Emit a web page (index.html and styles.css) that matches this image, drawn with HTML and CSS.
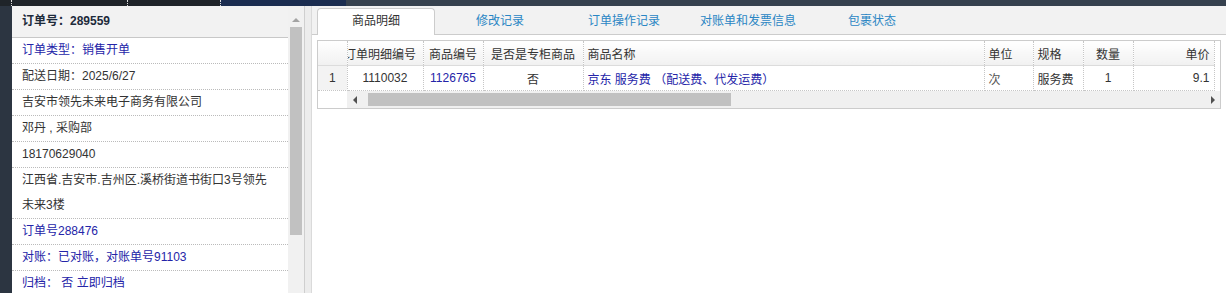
FILE: index.html
```html
<!DOCTYPE html>
<html lang="zh-CN">
<head>
  <meta charset="UTF-8">
  <title>订单详情</title>
  <link rel="stylesheet" href="styles.css">
</head>
<body>
  <div class="topbar">
    <span class="seg s1"></span>
    <span class="seg s2"></span>
    <span class="seg s3"></span>
    <span class="seg s4"></span>
    <span class="seg s5"></span>
  </div>

  <div class="main">
    <div class="side">
      <div class="order-head">订单号：289559</div>
      <div class="info-row blue">订单类型：销售开单</div>
      <div class="info-row">配送日期：2025/6/27</div>
      <div class="info-row">吉安市领先未来电子商务有限公司</div>
      <div class="info-row">邓丹 , 采购部</div>
      <div class="info-row">18170629040</div>
      <div class="info-row">江西省.吉安市.吉州区.溪桥街道书街口3号领先<br>未来3楼</div>
      <div class="info-row blue">订单号288476</div>
      <div class="info-row blue">对账：已对账，对账单号91103</div>
      <div class="info-row blue">归档： 否 立即归档</div>
    </div>
    <div class="vscroll">
      <div class="arrow-up"></div>
      <div class="vthumb"></div>
    </div>
    <div class="split"></div>

    <div class="content">
      <div class="tabs">
        <div class="tab active">商品明细</div>
        <div class="tab">修改记录</div>
        <div class="tab">订单操作记录</div>
        <div class="tab">对账单和发票信息</div>
        <div class="tab">包裹状态</div>
      </div>

      <div class="grid">
        <table>
          <colgroup>
            <col style="width:29px">
            <col style="width:76px">
            <col style="width:60px">
            <col style="width:100px">
            <col style="width:401px">
            <col style="width:49px">
            <col style="width:50px">
            <col style="width:50px">
            <col style="width:81px">
          </colgroup>
          <thead>
            <tr>
              <th class="rn"></th>
              <th><div class="clip"><span>订单明细编号</span></div></th>
              <th class="c">商品编号</th>
              <th class="c">是否是专柜商品</th>
              <th class="l">商品名称</th>
              <th class="l">单位</th>
              <th class="l">规格</th>
              <th class="c">数量</th>
              <th class="r">单价</th>
            </tr>
          </thead>
          <tbody>
            <tr>
              <td class="rn">1</td>
              <td class="c">1110032</td>
              <td class="c link">1126765</td>
              <td class="c">否</td>
              <td class="l link">京东 服务费 （配送费、代发运费）</td>
              <td class="l muted">次</td>
              <td class="l">服务费</td>
              <td class="c">1</td>
              <td class="r">9.1</td>
            </tr>
          </tbody>
        </table>
        <div class="hscroll">
          <div class="hs-pad"></div>
          <div class="hs-track">
            <span class="arrow-left"></span>
            <span class="hthumb"></span>
            <span class="arrow-right"></span>
          </div>
        </div>
      </div>
    </div>
  </div>
</body>
</html>
```

FILE: styles.css
```css
body {
  margin: 0;
  background: #2c3541;
  font-family: 'Liberation Sans', 'Noto Sans CJK SC', sans-serif;
  font-size: 12px;
  color: #333;
  overflow: hidden;
}
.topbar {
  display: flex;
  height: 6px;
}
.seg {
  height: 6px;
}
.s1 { width: 11px; background: #1f2429; }
.s2 { width: 115px; background: #1f2429; border-left: 1px dotted #ddd; }
.s3 { width: 92px; background: #1f2429; border-left: 1px dotted #ddd; }
.s4 { width: 125px; background: #1b2d50; border-left: 1px dotted #ddd; }
.s5 { flex: 1; background: #36414e; }

.main {
  display: flex;
  height: 287px;
}
.side {
  margin-left: 12px;
  width: 276px;
  background: #fff;
  overflow: hidden;
}
.order-head {
  height: 31px;
  line-height: 31px;
  padding-left: 10px;
  background: #f2f2f2;
  border-bottom: 1px solid #c8c8c8;
  font-weight: bold;
  color: #1e2b3b;
}
.info-row {
  line-height: 25px;
  padding: 0 10px;
  border-bottom: 1px dotted #bbb;
  color: #333;
}
.info-row.blue {
  color: #2424a8;
}
.vscroll {
  width: 16px;
  background: #f1f1f1;
}
.arrow-up {
  width: 0;
  height: 0;
  margin: 12px auto 0;
  border-left: 4px solid transparent;
  border-right: 4px solid transparent;
  border-bottom: 4px solid #a3a3a3;
}
.vthumb {
  margin: 5px 2px 0;
  height: 208px;
  background: #c1c1c1;
}
.split {
  width: 6px;
  background: #ececec;
  border-left: 1px solid #cfcfcf;
  border-right: 1px solid #dadada;
}

.content {
  flex: 1;
  background: #fff;
}
.tabs {
  display: flex;
  align-items: flex-end;
  gap: 6px;
  height: 28px;
  padding-left: 5px;
  background: #f2f2f2;
  border-bottom: 1px solid #ccc;
}
.tab {
  width: 116px;
  height: 25px;
  line-height: 25px;
  text-align: center;
  color: #2a86c4;
  border: 1px solid transparent;
  border-bottom: none;
  margin-bottom: -1px;
  padding-bottom: 1px;
}
.tab.active {
  background: #fff;
  color: #333;
  border-color: #ccc;
  border-radius: 4px 4px 0 0;
}

.grid {
  margin: 5px 5px 0 5px;
  border: 1px solid #ccc;
}
table {
  border-collapse: collapse;
  table-layout: fixed;
  width: 896px;
}
th, td {
  height: 24px;
  padding: 0 4px;
  white-space: nowrap;
  overflow: hidden;
  font-weight: normal;
  border-right: 1px dotted #c6c6c6;
}
th {
  background: linear-gradient(#ffffff, #f1f1f1);
  border-bottom: 1px solid #dcdcdc;
}
td {
  border-bottom: 1px dotted #c6c6c6;
}
th:first-child, td:first-child {
  padding: 0;
}
.clip {
  display: flex;
  justify-content: center;
  margin: 0 -4px;
  overflow: hidden;
}
.clip span {
  flex: none;
  padding-right: 10px;
}
.rn { text-align: center; }
td.rn { background: #f3f3f3; }
.c { text-align: center; }
.l { text-align: left; }
.r { text-align: right; }
.link { color: #2424a8; }
.muted { color: #555; }

.hscroll {
  display: flex;
  height: 17px;
}
.hs-pad {
  width: 29px;
  background: #fff;
}
.hs-track {
  flex: 1;
  display: flex;
  align-items: center;
  background: #f0f0f0;
}
.arrow-left {
  width: 0;
  height: 0;
  margin-left: 6px;
  border-top: 4px solid transparent;
  border-bottom: 4px solid transparent;
  border-right: 4px solid #505050;
}
.hthumb {
  width: 363px;
  height: 13px;
  margin-left: 11px;
  background: #c1c1c1;
}
.arrow-right {
  width: 0;
  height: 0;
  margin-left: auto;
  margin-right: 5px;
  border-top: 4px solid transparent;
  border-bottom: 4px solid transparent;
  border-left: 4px solid #505050;
}
```
